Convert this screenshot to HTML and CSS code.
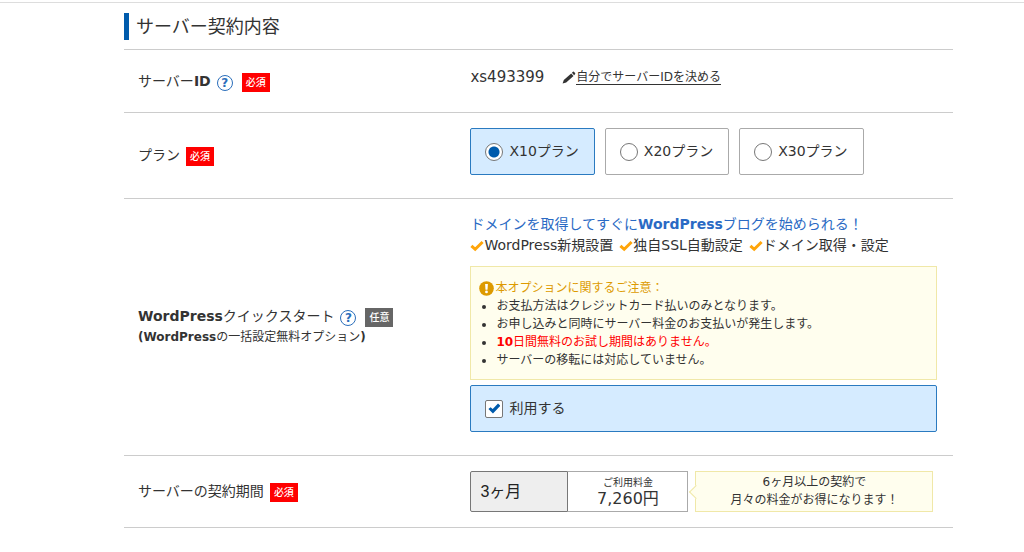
FILE: index.html
```html
<!DOCTYPE html>
<html lang="ja">
<head>
<meta charset="utf-8">
<title>サーバー契約内容</title>
<link rel="stylesheet" href="styles.css">
</head>
<body>
<main class="page">
  <h1 class="title">サーバー契約内容</h1>

  <form class="form">
    <section class="row">
      <div class="row-label">
        <div class="label-line">
          <span>サーバー<b>ID</b></span>
          <button class="help" type="button" aria-label="サーバーIDのヘルプ">?</button>
          <span class="badge badge-required">必須</span>
        </div>
      </div>
      <div class="row-body server-id">
        <span class="id-value">xs493399</span>
        <a class="edit-link" href="#">
          <svg class="pencil" viewBox="0 0 14 13" aria-hidden="true"><path d="M0.6 12.6 1.8 8.9 9.2 2.4 11.5 5 4.2 11.4ZM9.9 1.8 11 .8Q11.6.3 12.1.9L13.1 2Q13.6 2.7 13 3.3L12.1 4.3Z"/></svg><span class="edit-text">自分でサーバーIDを決める</span>
        </a>
      </div>
    </section>

    <section class="row">
      <div class="row-label">
        <div class="label-line">
          <span>プラン</span>
          <span class="badge badge-required">必須</span>
        </div>
      </div>
      <div class="row-body plans">
        <label class="option option-on"><input class="radio" type="radio" name="plan" checked>X10プラン</label>
        <label class="option"><input class="radio" type="radio" name="plan">X20プラン</label>
        <label class="option"><input class="radio" type="radio" name="plan">X30プラン</label>
      </div>
    </section>

    <section class="row">
      <div class="row-label">
        <div class="label-line">
          <span><b>WordPress</b>クイックスタート</span>
          <button class="help" type="button" aria-label="WordPressクイックスタートのヘルプ">?</button>
          <span class="badge badge-optional">任意</span>
        </div>
        <div class="label-note"><b>(WordPress</b>の一括設定無料オプション<b>)</b></div>
      </div>
      <div class="row-body">
        <p class="lead">ドメインを取得してすぐに<b>WordPress</b>ブログを始められる！</p>
        <ul class="features">
          <li class="feature"><svg class="tick" viewBox="0 0 14 12" aria-hidden="true"><path d="M1.4 5.8 5.2 9.3 12.6 2"/></svg>WordPress新規設置</li>
          <li class="feature"><svg class="tick" viewBox="0 0 14 12" aria-hidden="true"><path d="M1.4 5.8 5.2 9.3 12.6 2"/></svg>独自SSL自動設定</li>
          <li class="feature"><svg class="tick" viewBox="0 0 14 12" aria-hidden="true"><path d="M1.4 5.8 5.2 9.3 12.6 2"/></svg>ドメイン取得・設定</li>
        </ul>
        <div class="notice">
          <p class="notice-title"><svg class="alert" viewBox="0 0 15 15" aria-hidden="true"><circle cx="7.5" cy="7.5" r="7.3"/><path d="M6.1 3h2.8L8.5 8.7h-2Z"/><circle class="alert-dot" cx="7.5" cy="10.9" r="1.4"/></svg>本オプションに関するご注意：</p>
          <ul class="notice-list">
            <li>お支払方法はクレジットカード払いのみとなります。</li>
            <li>お申し込みと同時にサーバー料金のお支払いが発生します。</li>
            <li><span class="warn"><b>10</b>日間無料のお試し期間はありません。</span></li>
            <li>サーバーの移転には対応していません。</li>
          </ul>
        </div>
        <label class="option option-on"><input class="check" type="checkbox" checked>利用する</label>
      </div>
    </section>

    <section class="row row-last">
      <div class="row-label">
        <div class="label-line">
          <label for="term">サーバーの契約期間</label>
          <span class="badge badge-required">必須</span>
        </div>
      </div>
      <div class="row-body term">
        <select class="term-select" id="term"><option>3ヶ月</option></select>
        <div class="price">
          <span class="price-label">ご利用料金</span>
          <span class="price-value">7,260円</span>
        </div>
        <p class="balloon">6ヶ月以上の契約で<br>月々の料金がお得になります！</p>
      </div>
    </section>
  </form>
</main>
</body>
</html>
```
FILE: styles.css
```css
* {
  box-sizing: border-box;
}

body {
  margin: 0;
  background: #fff;
  color: #333;
  font: 14px/21px "DejaVu Sans", "Noto Sans CJK JP", sans-serif;
}

p,
ul {
  margin: 0;
  padding: 0;
}

.page {
  margin-top: 2px;
  border-top: 1px solid #ddd;
  padding: 10px 71px 24px 124px;
}

.title {
  margin: 0 0 9px;
  border-left: 5px solid #005bac;
  padding-left: 7px;
  font-size: 18px;
  line-height: 27px;
  font-weight: 400;
}

.row {
  display: grid;
  grid-template-columns: 5fr 7fr;
  align-items: center;
  border-top: 1px solid #ccc;
}

.row-last {
  border-bottom: 1px solid #ccc;
}

.row-label {
  padding-left: 14px;
}

.row-body {
  padding: 15px 16px 23px 1px;
}

.label-line {
  display: flex;
  align-items: center;
  gap: 6px;
}

.label-note {
  font-size: 12px;
}

.help {
  width: 16px;
  height: 16px;
  margin: 3px 3px 0 0;
  border: 1px solid #2a6ebb;
  border-radius: 50%;
  padding: 0;
  background: #fff;
  color: #2a6ebb;
  font: bold 12px/14px "DejaVu Sans", sans-serif;
}

.badge {
  margin-top: 2px;
  padding: 0 4px;
  color: #fff;
  font-size: 10px;
  font-weight: 500;
  line-height: 19px;
}

.badge-required {
  background: #f00;
}

.badge-optional {
  background: #666;
}

.server-id {
  display: flex;
  align-items: center;
  gap: 18px;
}

.id-value {
  font-size: 15px;
  line-height: 24px;
}

.edit-link {
  display: flex;
  align-items: center;
  color: #333;
  font-size: 12px;
  text-decoration: none;
}

.edit-text {
  border-bottom: 1px solid #333;
  line-height: 14px;
}

.pencil {
  width: 14px;
  height: 13px;
  fill: #333;
}

.plans {
  display: flex;
  gap: 10px;
}

.option {
  display: flex;
  align-items: center;
  gap: 6px;
  height: 47px;
  border: 1px solid #aaa;
  border-radius: 2px;
  padding: 0 15px 0 14px;
}

.option-on {
  border-color: #2a7ac0;
  background: #d5ebff;
}

.radio,
.check {
  appearance: none;
  width: 18px;
  height: 18px;
  margin: 0;
  border: 1px solid #777;
  background: #fff;
}

.radio {
  border-radius: 50%;
}

.radio:checked {
  background: radial-gradient(circle, #005bac 5px, #fff 6px);
}

.check {
  display: grid;
  place-items: center;
  border-radius: 2px;
}

.check:checked::before {
  content: "";
  width: 12px;
  height: 11px;
  background: #005bac;
  clip-path: polygon(0 55%, 18% 38%, 36% 55%, 80% 5%, 100% 24%, 38% 96%);
}

.lead {
  color: #2a6ac4;
}

.features {
  display: flex;
  gap: 6px;
  list-style: none;
}

.feature {
  display: flex;
  align-items: center;
}

.tick {
  width: 14px;
  height: 12px;
  fill: none;
  stroke: #ffa50a;
  stroke-width: 3;
}

.notice {
  margin: 10px 0 5px;
  border: 1px solid #f0e8a8;
  padding: 12px 8px 10px;
  background: #fffeee;
  font-size: 12px;
  line-height: 18px;
}

.notice-title {
  display: flex;
  align-items: center;
  gap: 1px;
  color: #dd9a00;
}

.alert {
  width: 15px;
  height: 15px;
  fill: #dd9a00;
}

.alert path,
.alert-dot {
  fill: #fff;
}

.notice-list {
  padding-left: 17px;
}

.warn {
  color: #f00;
}

.term {
  display: flex;
  align-items: stretch;
  padding-bottom: 15px;
}

.term-select {
  appearance: none;
  width: 98px;
  border: 1px solid #777;
  border-radius: 2px 0 0 2px;
  padding: 0 9px;
  background: #eee;
  color: #222;
  font: 16px "Liberation Sans", "Noto Sans CJK JP", sans-serif;
}

.price {
  display: flex;
  flex-direction: column;
  justify-content: center;
  align-items: center;
  width: 120px;
  border: 1px solid #aaa;
  border-left: 0;
}

.price-label {
  font-size: 10px;
  line-height: 15px;
}

.price-value {
  font-size: 16px;
  line-height: 18px;
}

.balloon {
  position: relative;
  width: 238px;
  margin-left: 7px;
  border: 1px solid #f0e8a8;
  padding: 1px 0 2px;
  background: #fffeee;
  font-size: 12px;
  line-height: 18px;
  text-align: center;
}

.balloon::before {
  content: "";
  position: absolute;
  top: 15px;
  left: -5px;
  width: 9px;
  height: 9px;
  border: solid #f0e8a8;
  border-width: 0 0 1px 1px;
  background: #fffeee;
  transform: rotate(45deg);
}
```
